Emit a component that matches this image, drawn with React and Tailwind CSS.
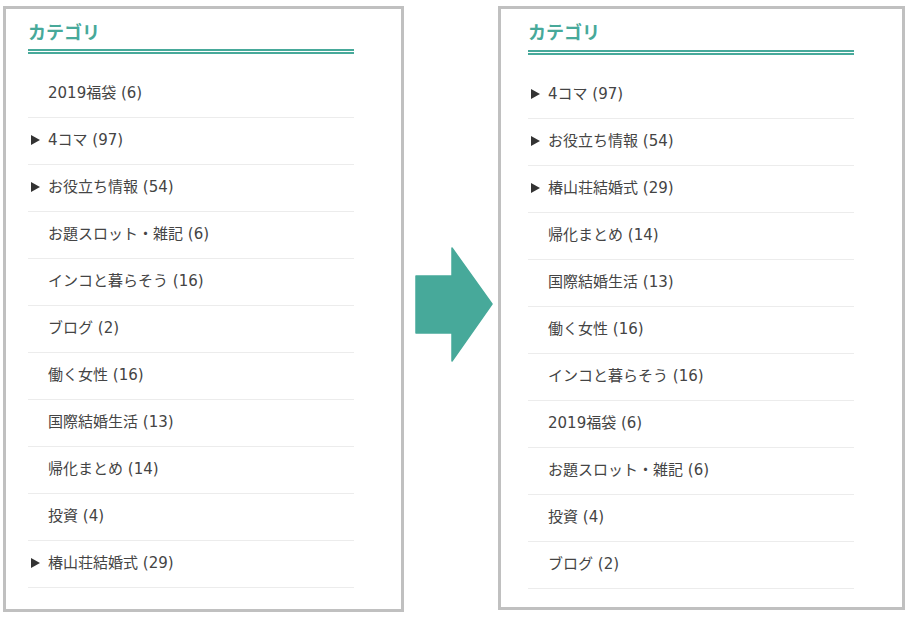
const before = [
  { name: '2019福袋', count: 6 },
  { name: '4コマ', count: 97, sub: true },
  { name: 'お役立ち情報', count: 54, sub: true },
  { name: 'お題スロット・雑記', count: 6 },
  { name: 'インコと暮らそう', count: 16 },
  { name: 'ブログ', count: 2 },
  { name: '働く女性', count: 16 },
  { name: '国際結婚生活', count: 13 },
  { name: '帰化まとめ', count: 14 },
  { name: '投資', count: 4 },
  { name: '椿山荘結婚式', count: 29, sub: true },
]

const after = [
  { name: '4コマ', count: 97, sub: true },
  { name: 'お役立ち情報', count: 54, sub: true },
  { name: '椿山荘結婚式', count: 29, sub: true },
  { name: '帰化まとめ', count: 14 },
  { name: '国際結婚生活', count: 13 },
  { name: '働く女性', count: 16 },
  { name: 'インコと暮らそう', count: 16 },
  { name: '2019福袋', count: 6 },
  { name: 'お題スロット・雑記', count: 6 },
  { name: '投資', count: 4 },
  { name: 'ブログ', count: 2 },
]

function Triangle() {
  return (
    <svg width="9" height="10" viewBox="0 0 9 10" className="block">
      <polygon points="0,0 9,5 0,10" fill="#333" />
    </svg>
  )
}

function CategoryBox({ items, width, height, padLeft, lineGap }) {
  return (
    <div className={`border-[3px] border-[#c0c0c0] bg-white pt-[10px] ${width} ${height} ${padLeft}`}>
      <div className="w-[326px]">
        {/* Heading */}
        <h3 className="text-[18px] leading-[27px] font-bold text-[#47a99a]">カテゴリ</h3>
        <div className={lineGap}>
          <div className="h-[2px] bg-[#47a99a]" />
          <div className="h-[2px] mt-[1px] bg-[#47a99a]" />
        </div>

        {/* List */}
        <ul className="mt-[17px]">
          {items.map(item => (
            <li key={item.name} className="flex items-center h-[47px] pb-[2px] border-b border-[#ececec]">
              <span className="w-[20px] pl-[3px] flex items-center">
                {item.sub && <Triangle />}
              </span>
              <span className="text-[15px] text-[#444]">
                {item.name} ({item.count})
              </span>
            </li>
          ))}
        </ul>
      </div>
    </div>
  )
}

export default function App() {
  return (
    <div
      className="w-[913px] h-[635px] bg-white flex items-start pt-[6px] pl-[3px]"
      style={{ fontFamily: '"DejaVu Sans", "Noto Sans CJK JP", sans-serif' }}
    >
      <CategoryBox items={before} width="w-[401px]" height="h-[606px]" padLeft="pl-[22px]" lineGap="mt-[3px]" />

      {/* Arrow */}
      <div className="ml-[11px] mt-[241px] mr-[5px]">
        <svg width="78" height="115" viewBox="0 0 78 115" className="block">
          <path
            d="M1 29 H37 V1 L77 57 L37 114 V86 H1 Z"
            fill="#47a99a"
            stroke="#47a99a"
            strokeWidth="1.5"
            strokeLinejoin="round"
          />
        </svg>
      </div>

      <CategoryBox items={after} width="w-[407px]" height="h-[604px]" padLeft="pl-[27px]" lineGap="mt-[4px]" />
    </div>
  )
}
